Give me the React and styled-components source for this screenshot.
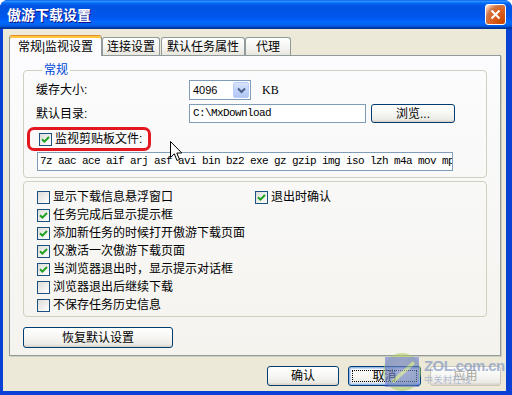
import styled, { createGlobalStyle } from "styled-components";

const GlobalStyle = createGlobalStyle`
  html, body { margin: 0; padding: 0; background: #fff; }
  body {
    font-family: "Liberation Sans", "Noto Sans CJK SC", sans-serif;
    font-size: 12px;
    color: #000;
  }
  * { box-sizing: border-box; }
`;

const Window = styled.div`
  position: relative;
  width: 512px;
  height: 395px;
  display: flex;
  flex-direction: column;
  background: #0841d4;
  border-radius: 8px 8px 0 0;
  overflow: hidden;
`;

const TitleBar = styled.div`
  flex: none;
  height: 29px;
  display: flex;
  align-items: center;
  justify-content: space-between;
  padding: 0 6px 0 7px;
  background: linear-gradient(
    to bottom,
    #0058ee 0%, #3593ff 4%, #288eff 6%, #127dff 8%, #036ffc 10%,
    #0262ee 14%, #0057e5 20%, #0054e3 24%, #0055eb 56%, #005bf5 66%,
    #026afe 76%, #0062ef 86%, #0052d6 92%, #0040ab 94%, #003092 100%
  );
`;

const Title = styled.span`
  color: #fff;
  font-weight: bold;
  font-size: 14px;
  text-shadow: 1px 1px #0f1089;
  line-height: 16px;
`;

const CloseButton = styled.div`
  width: 21px;
  height: 21px;
  border: 1px solid #fff;
  border-radius: 3px;
  display: flex;
  align-items: center;
  justify-content: center;
  background: radial-gradient(
    circle at 90% 90%,
    #cc4600 0%, #dc6527 55%, #cd7546 70%, #ffccb2 90%, #fff 100%
  );
`;

const Client = styled.div`
  flex: 1;
  margin: 0 6px 4px 3px;
  background: #ece9d8;
  padding: 6px 5px 0 6px;
  display: flex;
  flex-direction: column;
`;

const TabRow = styled.div`
  display: flex;
  align-items: flex-end;
`;

const Tab = styled.div`
  position: relative;
  z-index: ${(p) => (p.$active ? 1 : 0)};
  width: ${(p) => p.$w}px;
  height: ${(p) => (p.$active ? 21 : 18)}px;
  margin-bottom: ${(p) => (p.$active ? "-1px" : "0")};
  margin-left: ${(p) => p.$ml || 0}px;
  border: 1px solid #919b9c;
  border-bottom: none;
  border-top: ${(p) => (p.$active ? "1px solid #e68b2c" : "1px solid #919b9c")};
  box-shadow: ${(p) => (p.$active ? "inset 0 2px 0 #ffc83c" : "none")};
  border-radius: 3px 3px 0 0;
  background: ${(p) =>
    p.$active ? "#fcfcfe" : "linear-gradient(to bottom, #fff 0%, #f3f3ef 60%, #e8e6dd 100%)"};
  display: flex;
  align-items: center;
  justify-content: center;
  padding-top: ${(p) => (p.$active ? 2 : 0)}px;
  line-height: 14px;
  white-space: nowrap;
`;

const Panel = styled.div`
  height: 301px;
  border: 1px solid #919b9c;
  box-shadow: 1px 1px 0 #d0cebf;
  background: linear-gradient(to bottom, #fcfcfe, #f4f3ee);
  padding: 7px 13px 0;
  display: flex;
  flex-direction: column;
`;

const Group = styled.fieldset`
  margin: ${(p) => p.$mt || 0}px 0 0;
  padding: ${(p) => p.$pad};
  border: 1px solid #d0d0bf;
  border-radius: 4px;
  min-inline-size: 0;
`;

const Legend = styled.legend`
  margin-left: 6px;
  padding: 0 2px;
  color: #0046d5;
  line-height: 14px;
  font-size: 12px;
`;

const FormRow = styled.div`
  display: flex;
  align-items: center;
  height: ${(p) => p.$h}px;
  margin-top: ${(p) => p.$mt || 0}px;
  margin-left: ${(p) => p.$ml || 0}px;
`;

const Label = styled.span`
  width: 153px;
  line-height: 14px;
`;

const Combo = styled.div`
  width: 62px;
  height: 20px;
  border: 1px solid #7f9db9;
  background: #fff;
  display: flex;
  align-items: stretch;
`;

const ComboValue = styled.span`
  flex: 1;
  padding-left: 3px;
  font: 11px "Liberation Sans", sans-serif;
  line-height: 18px;
`;

const ComboButton = styled.span`
  width: 16px;
  margin: 1px;
  border: 1px solid #b9cdf8;
  border-radius: 2px;
  background: linear-gradient(to bottom, #d7e4fd 0%, #c1d3fb 50%, #b2c7f6 100%);
  display: flex;
  align-items: center;
  justify-content: center;
`;

const Unit = styled.span`
  margin-left: 11px;
  font: 12px "Liberation Serif", serif;
`;

const Field = styled.div`
  width: ${(p) => p.$w}px;
  height: 19px;
  border: 1px solid #7f9db9;
  background: #fff;
  padding: 0 ${(p) => p.$px || 3}px;
  font: 11px "Liberation Mono", monospace;
  letter-spacing: -0.6px;
  line-height: 17px;
  white-space: nowrap;
  overflow: hidden;
`;

const Button = styled.button`
  position: relative;
  width: ${(p) => p.$w}px;
  height: ${(p) => p.$h || 20}px;
  margin-left: ${(p) => p.$ml || 0}px;
  padding: 0;
  border: 1px solid ${(p) => (p.disabled ? "#c9c7ba" : "#003c74")};
  border-radius: 3px;
  background: linear-gradient(to bottom, #fff 0%, #f7f7f4 45%, #ecebe6 85%, #d6d0c5 100%);
  box-shadow: ${(p) =>
    p.$focus ? "inset 0 0 0 1px #98b8ea, inset 0 0 0 2px #c4d7f6" : "none"};
  color: ${(p) => (p.disabled ? "#aca899" : "#000")};
  font: 12px "Liberation Sans", "Noto Sans CJK SC", sans-serif;
  line-height: 14px;

  &::after {
    content: "";
    display: ${(p) => (p.$focus ? "block" : "none")};
    position: absolute;
    inset: 3px;
    border: 1px dotted #000;
  }
`;

const Highlight = styled.div`
  display: inline-flex;
  align-items: center;
  align-self: flex-start;
  height: 24px;
  margin-top: 4px;
  margin-left: -9px;
  padding: 0 6px 0 9px;
  border: 3px solid #e3171f;
  border-radius: 7px;
`;

const Option = styled.label`
  display: flex;
  align-items: center;
  gap: 3px;
  height: 18px;
  line-height: 14px;
  white-space: nowrap;
`;

const Box = styled.span`
  flex: none;
  width: 13px;
  height: 13px;
  border: 1px solid #1c5180;
  background: linear-gradient(135deg, #dcdcd7 0%, #fff 100%);
  display: flex;
  align-items: center;
  justify-content: center;
`;

const OptionColumns = styled.div`
  display: flex;
`;

const OptionColumn = styled.div`
  width: ${(p) => p.$w || "auto"};
  display: flex;
  flex-direction: column;
`;

const Footer = styled.div`
  display: flex;
  justify-content: flex-end;
  gap: 9px;
  padding-top: 10px;
`;

const Cursor = styled.svg`
  position: absolute;
  left: 170px;
  top: 141px;
`;

const Watermark = styled.div`
  position: absolute;
  left: 383px;
  top: 351px;
  display: flex;
  align-items: center;
  gap: 3px;
  opacity: 0.7;
  pointer-events: none;
`;

const WatermarkText = styled.div`
  display: flex;
  flex-direction: column;
  line-height: 1;
`;

const Brand = styled.span`
  font: bold 15px "Liberation Sans", sans-serif;
  color: #8799c2;
  letter-spacing: -0.6px;
`;

const BrandSub = styled.span`
  margin-top: 2px;
  font-size: 9px;
  color: #9aa8c8;
  letter-spacing: 0.5px;
`;

function Check({ checked }) {
  return (
    <Box>
      {checked && (
        <svg width="9" height="9" viewBox="0 0 9 9">
          <path d="M1 4.2 L3.4 6.6 L8 2" fill="none" stroke="#21a121" strokeWidth="2" />
        </svg>
      )}
    </Box>
  );
}

const leftOptions = [
  { text: "显示下载信息悬浮窗口", checked: false },
  { text: "任务完成后显示提示框", checked: true },
  { text: "添加新任务的时候打开傲游下载页面", checked: true },
  { text: "仅激活一次傲游下载页面", checked: true },
  { text: "当浏览器退出时，显示提示对话框", checked: true },
  { text: "浏览器退出后继续下载", checked: false },
  { text: "不保存任务历史信息", checked: false },
];

const tabs = [
  { text: "常规|监视设置", w: 93, active: true },
  { text: "连接设置", w: 58 },
  { text: "默认任务属性", w: 84, ml: 1 },
  { text: "代理", w: 46 },
];

export default function App() {
  return (
    <>
      <GlobalStyle />
      <Window>
        <TitleBar>
          <Title>傲游下载设置</Title>
          <CloseButton>
            <svg width="11" height="11" viewBox="0 0 11 11">
              <path d="M1.5 1.5 L9.5 9.5 M9.5 1.5 L1.5 9.5" stroke="#fff" strokeWidth="2" />
            </svg>
          </CloseButton>
        </TitleBar>

        <Client>
          <TabRow>
            {tabs.map((t) => (
              <Tab key={t.text} $w={t.w} $ml={t.ml} $active={t.active}>
                {t.text}
              </Tab>
            ))}
          </TabRow>

          <Panel>
            <Group $pad="3px 12px 6px 12px">
              <Legend>常规</Legend>
              <FormRow $h={20}>
                <Label>缓存大小:</Label>
                <Combo>
                  <ComboValue>4096</ComboValue>
                  <ComboButton>
                    <svg width="9" height="7" viewBox="0 0 9 7">
                      <path d="M1 1.5 L4.5 5 L8 1.5" fill="none" stroke="#4d6185" strokeWidth="2" />
                    </svg>
                  </ComboButton>
                </Combo>
                <Unit>KB</Unit>
              </FormRow>
              <FormRow $h={19} $mt={4}>
                <Label>默认目录:</Label>
                <Field $w={177}>C:\MxDownload</Field>
                <Button $w={84} $h={19} $ml={5}>浏览...</Button>
              </FormRow>
              <Highlight>
                <Option as="span">
                  <Check checked />
                  监视剪贴板文件:
                </Option>
              </Highlight>
              <FormRow $h={19} $mt={1} $ml={1}>
                <Field $w={416} $px={2}>
                  7z aac ace aif arj asf avi bin bz2 exe gz gzip img iso lzh m4a mov mp3 mpeg mpg
                </Field>
              </FormRow>
            </Group>

            <Group $mt={3} $pad="6px 0 2px 13px">
              <OptionColumns>
                <OptionColumn $w="218px">
                  {leftOptions.map((o) => (
                    <Option key={o.text}>
                      <Check checked={o.checked} />
                      {o.text}
                    </Option>
                  ))}
                </OptionColumn>
                <OptionColumn>
                  <Option>
                    <Check checked />
                    退出时确认
                  </Option>
                </OptionColumn>
              </OptionColumns>
            </Group>

            <FormRow $h={21} $mt={10}>
              <Button $w={150} $h={21}>恢复默认设置</Button>
            </FormRow>
          </Panel>

          <Footer>
            <Button $w={72}>确认</Button>
            <Button $w={73} $focus>取消</Button>
            <Button $w={71} disabled>应用</Button>
          </Footer>
        </Client>

        <Cursor width="13" height="21" viewBox="0 0 13 21">
          <path
            d="M0.5 0.5 L0.5 16.5 L4.3 12.8 L7 19.5 L9.5 18.5 L6.8 12 L11.8 12 Z"
            fill="#fff"
            stroke="#000"
            strokeWidth="1"
          />
        </Cursor>

        <Watermark>
          <svg width="38" height="40" viewBox="0 0 38 40">
            <defs>
              <radialGradient id="zolGlow" cx="50%" cy="45%" r="55%">
                <stop offset="0%" stopColor="#f2e98a" />
                <stop offset="100%" stopColor="#9cc85a" />
              </radialGradient>
            </defs>
            <circle cx="19" cy="21" r="19" fill="url(#zolGlow)" opacity="0.8" />
            <rect x="2" y="6" width="34" height="30" fill="#4f63d6" opacity="0.7" />
            <path d="M8 30 L30 10 L32 13 L11 32 Z" fill="#c9e07a" opacity="0.8" />
          </svg>
          <WatermarkText>
            <Brand>ZOL.com.cn</Brand>
            <BrandSub>中关村在线</BrandSub>
          </WatermarkText>
        </Watermark>
      </Window>
    </>
  );
}
